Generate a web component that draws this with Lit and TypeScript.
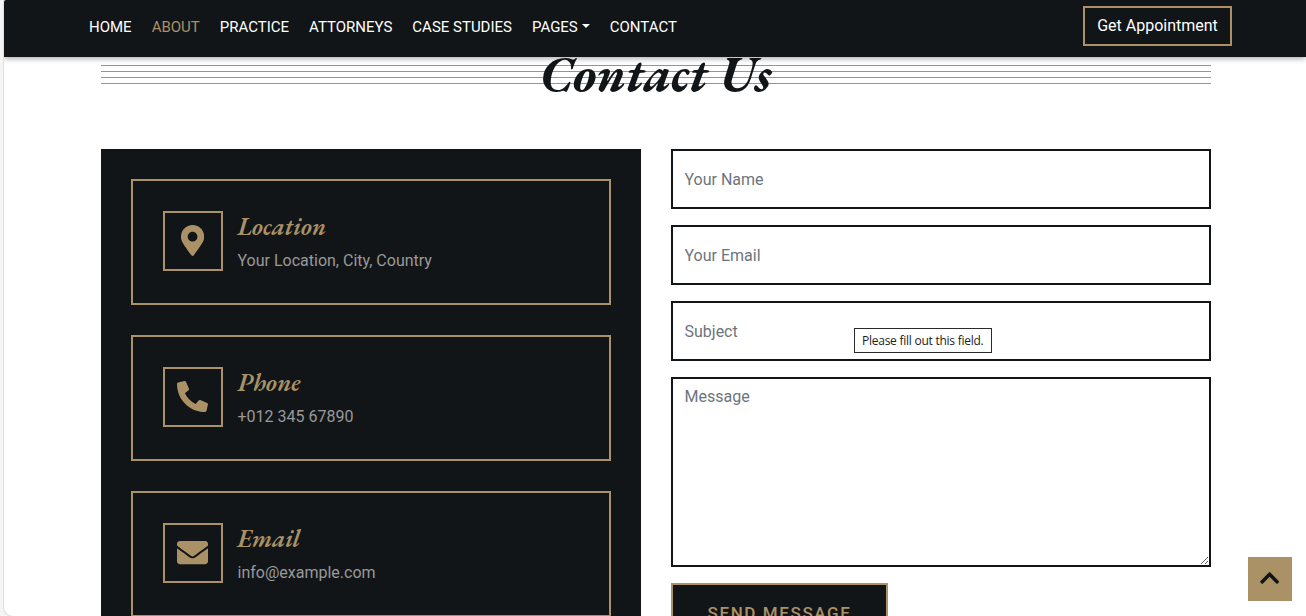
import { LitElement, html, css, svg } from "lit";
import { customElement } from "lit/decorators.js";
import { classMap } from "lit/directives/class-map.js";

const icons = {
  pin: svg`<svg viewBox="0 0 384 512" width="23.2" height="31" fill="currentColor"><path d="M172.268 501.67C26.97 291.031 0 269.413 0 192 0 85.961 85.961 0 192 0s192 85.961 192 192c0 77.413-26.97 99.031-172.268 309.67-9.535 13.774-29.93 13.773-39.464 0zM192 272c44.183 0 80-35.817 80-80s-35.817-80-80-80-80 35.817-80 80 35.817 80 80 80z"/></svg>`,
  phone: svg`<svg viewBox="0 0 512 512" width="31" height="31" fill="currentColor"><path d="M493.4 24.6l-104-24c-11.3-2.6-22.9 3.3-27.5 13.9l-48 112c-4.2 9.8-1.4 21.3 6.9 28l60.6 49.6c-36 76.7-98.9 140.5-177.200 177.200l-49.6-60.6c-6.800-8.300-18.200-11.100-28-6.900l-112 48C3.900 366.500-2 378.100.6 389.400l24 104C27.100 504.200 36.700 512 48 512c256.100 0 464-207.500 464-464 0-11.200-7.700-20.900-18.600-23.400z" transform="matrix(-1 0 0 1 512 0)"/></svg>`,
  mail: svg`<svg viewBox="0 0 512 512" width="31" height="31" fill="currentColor"><path d="M502.3 190.8c3.900-3.100 9.700-.2 9.700 4.700V400c0 26.500-21.500 48-48 48H48c-26.500 0-48-21.500-48-48V195.600c0-5 5.700-7.800 9.700-4.700 22.400 17.400 52.100 39.500 154.100 113.600 21.100 15.400 56.700 47.800 92.200 47.600 35.700.3 72-32.800 92.300-47.600 102-74.100 131.600-96.300 154-113.700zM256 320c23.200.4 56.600-29.200 73.400-41.400 132.700-96.300 142.800-104.700 173.400-128.700 5.800-4.500 9.200-11.500 9.200-18.900v-19c0-26.500-21.500-48-48-48H48c-26.500 0-48 21.500-48 48v19c0 7.400 3.400 14.300 9.200 18.900 30.600 23.900 40.700 32.400 173.400 128.700 16.800 12.200 50.200 41.800 73.400 41.400z"/></svg>`,
};

const links = ["HOME", "ABOUT", "PRACTICE", "ATTORNEYS", "CASE STUDIES", "PAGES", "CONTACT"];
const contacts = [
  { icon: icons.pin, title: "Location", text: "Your Location, City, Country" },
  { icon: icons.phone, title: "Phone", text: "+012 345 67890" },
  { icon: icons.mail, title: "Email", text: "info@example.com" },
];

@customElement("app-root")
export class AppRoot extends LitElement {
  static styles = css`
    :host { display: block; height: 616px; overflow: hidden; position: relative; background: #f5f5f5; font: 16px/24px Roboto, "Liberation Sans", sans-serif; color: #121518; }
    * { box-sizing: border-box; }
    .page { margin-left: 4px; height: 616px; background: #fff; overflow: hidden; border-radius: 2px 0 0 9px; box-shadow: 0 0 1px 1px #dedede; }
    .bar { height: 57px; background: #121518; box-shadow: 0 2px 5px rgba(0, 0, 0, .3); display: flex; justify-content: space-between; padding: 6px 74px 0 85px; position: relative; z-index: 1; }
    nav { display: flex; gap: 20px; padding-top: 10px; }
    nav a { color: #fff; font-size: 15px; line-height: 23px; white-space: nowrap; }
    nav a.active { color: #aa9166; }
    .caret { display: inline-block; margin-left: 4px; vertical-align: 4px; border: 4px solid transparent; border-top-color: currentColor; border-bottom: 0; }
    .appt { height: 40px; width: 149px; border: 2px solid #aa9166; color: #fff; font: 400 16px/24px Roboto, sans-serif; text-align: center; background: none; padding: 0 0 1px; }
    .title { margin: 8px 95px 0 97px; height: 19px; display: flex; justify-content: center; align-items: center;
      background: repeating-linear-gradient(#aa9166 0 1px, transparent 1px 6px); }
    h2 { margin: 0; padding: 0 1px 2px 0; font: italic 700 50px/60px "EB Garamond", "Liberation Serif", serif; white-space: nowrap; }
    .cols { display: flex; gap: 30px; margin: 65px 0 0 97px; width: 1110px; }
    .info { width: 540px; height: 498px; background: #121518; padding: 30px; display: flex; flex-direction: column; gap: 30px; }
    .card { flex: none; height: 126px; border: 2px solid #aa9166; padding: 30px; display: flex; gap: 14.5px; }
    .icon { width: 60px; height: 60px; border: 2px solid #aa9166; color: #aa9166; display: flex; align-items: center; justify-content: center; padding: 0 1px 1px 0; }
    .icon svg { display: block; }
    h3 { margin: 0 0 8px; font: italic 600 25px/30px "EB Garamond", "Liberation Serif", serif; color: #aa9166; }
    p { margin: 0; color: #999; }
    form { width: 540px; display: flex; flex-direction: column; }
    input, textarea { display: block; width: 100%; border: 2px solid #121518; border-radius: 0; background: #fff; margin: 0 0 16px; font: 16px/24px Roboto, sans-serif; outline: 0; padding: 6px 11.5px; }
    input { height: 60px; }
    textarea { height: 190px; resize: vertical; }
    ::placeholder { color: #6c757d; opacity: 1; }
    .send { width: 217px; height: 60px; background: #121518; border: 2px solid #aa9166; color: #aa9166; font: 500 17px/24px Roboto, sans-serif; letter-spacing: 1.6px; padding: 0; }
    .tip { position: absolute; left: 854px; top: 328px; width: 138px; height: 25px; border: 1px solid #2b2b2b; background: #fff; color: #1c1c1c; font: 12px/23px "Open Sans", "Noto Sans", sans-serif; letter-spacing: -.25px; padding-left: 7px; white-space: nowrap; }
    .top { position: absolute; left: 1248px; top: 557px; width: 44px; height: 44px; background: #aa9166; display: flex; align-items: center; justify-content: center; padding-bottom: 2px; }
  `;

  render() {
    return html`
      <div class="page">
        <header class="bar">
          <nav>
            ${links.map((l) => html`<a class=${classMap({ active: l === "ABOUT" })}>${l}${l === "PAGES" ? html`<span class="caret"></span>` : ""}</a>`)}
          </nav>
          <button class="appt">Get Appointment</button>
        </header>
        <div class="title"><h2>Contact Us</h2></div>
        <div class="cols">
          <div class="info">
            ${contacts.map((c) => html`
              <div class="card">
                <div class="icon">${c.icon}</div>
                <div><h3>${c.title}</h3><p>${c.text}</p></div>
              </div>`)}
          </div>
          <form>
            <input placeholder="Your Name" />
            <input placeholder="Your Email" />
            <input placeholder="Subject" />
            <textarea placeholder="Message"></textarea>
            <button type="button" class="send">SEND MESSAGE</button>
          </form>
        </div>
      </div>
      <div class="tip">Please fill out this field.</div>
      <div class="top">
        <svg viewBox="0 0 448 512" width="19.25" height="22" fill="#121518"><path d="M240.971 130.524l194.343 194.343c9.373 9.373 9.373 24.569 0 33.941l-22.667 22.667c-9.357 9.357-24.522 9.375-33.901.04L224 227.495 69.255 381.516c-9.379 9.335-24.544 9.317-33.901-.04l-22.667-22.667c-9.373-9.373-9.373-24.569 0-33.941L207.030 130.525c9.372-9.373 24.568-9.373 33.941-.001z"/></svg>
      </div>`;
  }
}
